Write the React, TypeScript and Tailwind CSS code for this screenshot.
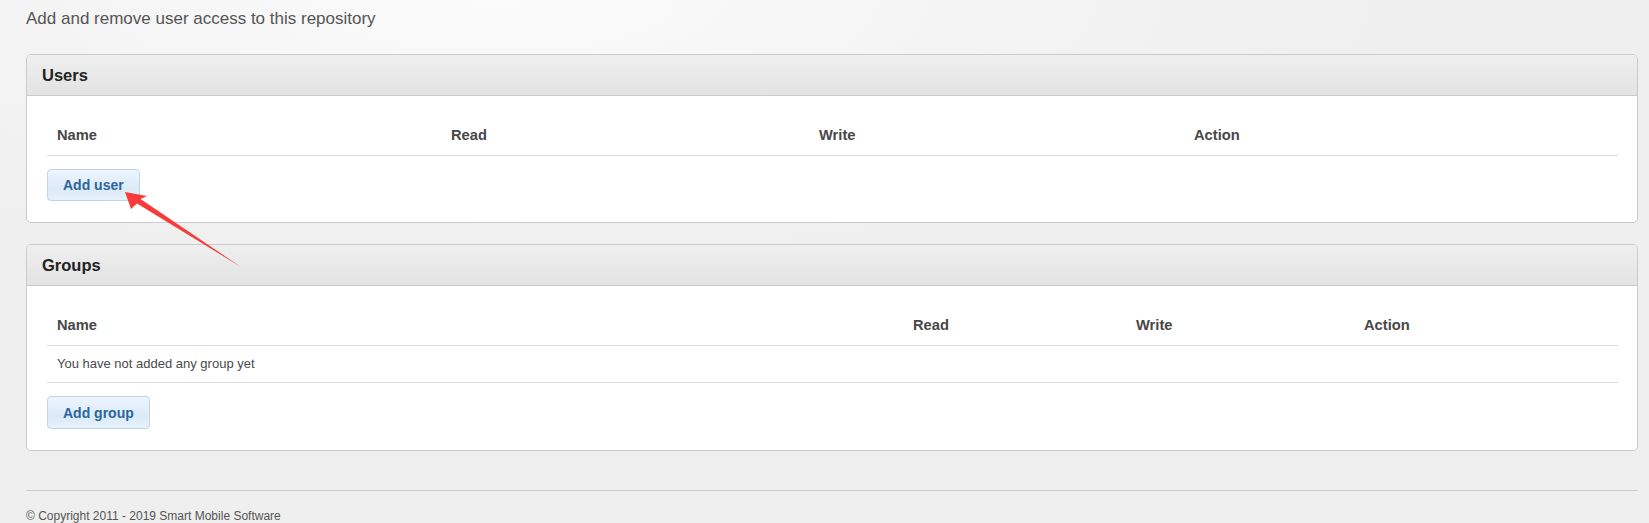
import React from "react";

type Column = { label: string };

const AddButton: React.FC<{ label: string; tall?: boolean }> = ({ label, tall }) => (
  <button
    className={`${
      tall ? "h-[33px]" : "h-[32px]"
    } px-[15px] rounded-[4px] border border-[#bcd5ea] bg-[linear-gradient(#ecf5fe,#dceaf8_62%,#e6f1fb)] text-[14px] font-bold leading-none text-[#2b669b]`}
  >
    {label}
  </button>
);

const Panel: React.FC<{ title: string; children: React.ReactNode }> = ({ title, children }) => (
  <section className="rounded-[5px] border border-[#cbcbcb] bg-white overflow-hidden">
    <div className="h-[41px] flex items-center px-[15px] border-b border-[#cbcbcb] bg-[linear-gradient(#efefef,#e3e3e3)] text-[16.5px] font-bold text-[#222]">
      {title}
    </div>
    <div className="pt-[20px] pb-[21px] pl-[20px] pr-[19px]">{children}</div>
  </section>
);

const HeaderRow: React.FC<{ cols: Column[]; grid: string }> = ({ cols, grid }) => (
  <div className={`grid ${grid} h-[40px] items-center border-b border-[#dddddd]`}>
    {cols.map((c) => (
      <div key={c.label} className="pl-[10px] text-[14.7px] font-bold text-[#474747]">
        {c.label}
      </div>
    ))}
  </div>
);

const userCols: Column[] = [{ label: "Name" }, { label: "Read" }, { label: "Write" }, { label: "Action" }];

const App: React.FC = () => {
  return (
    <div className="relative min-h-screen font-['Liberation_Sans',Arial,sans-serif] bg-[#efefef] bg-[radial-gradient(ellipse_900px_260px_at_30%_0%,#fbfbfb_0%,#f3f3f3_60%,#efefef_100%)]">
      <div className="pl-[26px] pr-[11px] pt-[7px]">
        <p className="text-[17px] leading-[24px] text-[#555]">Add and remove user access to this repository</p>

        <div className="mt-[23px]">
          <Panel title="Users">
            <HeaderRow cols={userCols} grid="grid-cols-[394px_368px_375px_1fr]" />
            <div className="mt-[13px]">
              <AddButton label="Add user" />
            </div>
          </Panel>
        </div>

        <div className="mt-[21px]">
          <Panel title="Groups">
            <HeaderRow cols={userCols} grid="grid-cols-[856px_223px_228px_1fr]" />
            <div className="h-[37px] flex items-center pl-[10px] border-b border-[#dddddd] text-[13px] text-[#4a4a4a]">
              You have not added any group yet
            </div>
            <div className="mt-[13px]">
              <AddButton label="Add group" tall />
            </div>
          </Panel>
        </div>

        <footer className="mt-[39px] border-t border-[#cccccc] pt-[16px] pb-[20px]">
          <p className="text-[12px] leading-[18px] text-[#555]">© Copyright 2011 - 2019 Smart Mobile Software</p>
        </footer>
      </div>

      {/* annotation arrow */}
      <svg className="absolute left-0 top-0 pointer-events-none" width="300" height="300" viewBox="0 0 300 300">
        <polygon
          points="125,192 147,196 140.5,199 241,267 137,203.5 131,209"
          fill="#f83a3a"
        />
      </svg>
    </div>
  );
};

export default App;
